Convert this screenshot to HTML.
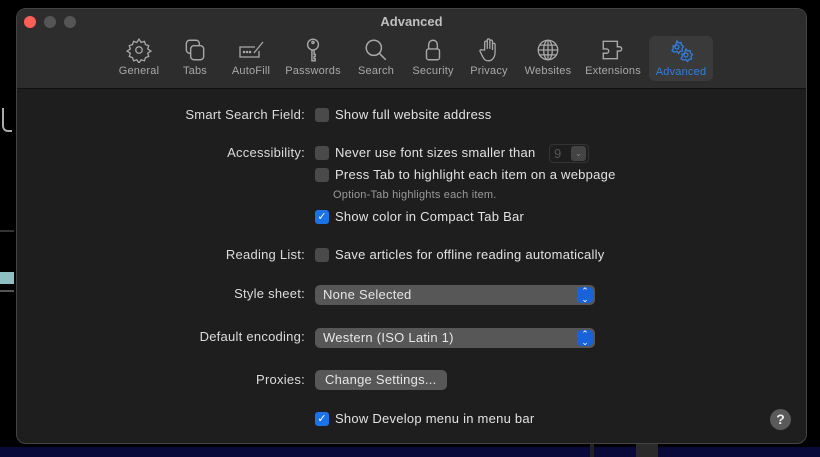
<!DOCTYPE html>
<html><head><style>
*{margin:0;padding:0;box-sizing:border-box}
body{width:820px;height:457px;background:#000;position:relative;overflow:hidden;font-family:"Liberation Sans",sans-serif;color:#e0e0e0}
.win{position:absolute;left:16px;top:8px;width:791px;height:436px;border-radius:10px;background:#1e1e1e;border:1px solid #444;overflow:hidden}
.tb{position:absolute;left:0;top:0;right:0;height:80px;background:#2d2d2d;border-bottom:1px solid #111}
.a{position:absolute}
.title{left:0;right:0;top:5px;text-align:center;font-weight:bold;font-size:13px;color:#bfbfbf}
.dot{width:12px;height:12px;border-radius:50%;top:7px;background:#555}
.it{position:absolute;top:26px;width:64px;height:46px;text-align:center;font-size:11px;color:#a8a8a8;letter-spacing:.2px}
.it svg{display:block;margin:2px auto 0;width:28px;height:26px}
.it span{position:absolute;left:-10px;right:-10px;top:30px;text-align:center}
.sel{background:#3a3a3a;border-radius:6px;color:#2f7fe0}
.lbl{position:absolute;right:501px;font-size:13px;color:#dcdcdc;text-align:right;white-space:nowrap;letter-spacing:.25px}
.cb{position:absolute;left:298px;width:14px;height:14px;border-radius:3px;background:#4a4a4a}
.cb.on{background:#1a73e8}
.tx{position:absolute;left:318px;font-size:13px;color:#e2e2e2;white-space:nowrap;letter-spacing:.25px}
.pop{position:absolute;left:298px;width:280px;height:20px;border-radius:5px;background:#575757;font-size:13px;color:#e6e6e6;padding:2px 8px;letter-spacing:.25px}
.pop i{position:absolute;right:2px;top:2px;width:16px;height:16px;border-radius:4px;background:#1a62d8;color:#fff;font-size:9px;line-height:8px;text-align:center;font-style:normal;letter-spacing:0}
</style></head><body>
<div class="a" style="left:0;top:230px;width:14px;height:2px;background:#333"></div>
<div class="a" style="left:0;top:272px;width:14px;height:12px;background:#8fbfc2"></div>
<div class="a" style="left:0;top:290px;width:14px;height:2px;background:#555"></div>
<div class="a" style="left:2px;top:108px;width:10px;height:24px;border-left:2px solid #aaa;border-bottom:2px solid #aaa;border-radius:0 0 0 6px"></div>
<div class="a" style="left:0;top:447px;width:820px;height:10px;background:#0a0a3a"></div>
<div class="a" style="left:590px;top:444px;width:4px;height:13px;background:#222"></div>
<div class="a" style="left:636px;top:444px;width:22px;height:13px;background:#2a2a2a"></div>
<div class="win">
<div class="tb">
<div class="a title">Advanced</div>
<div class="a dot" style="left:7px;background:#fe5f57"></div>
<div class="a dot" style="left:27px"></div>
<div class="a dot" style="left:47px"></div>
<div class="it" style="left:90px"><svg viewBox="0 0 24 24" fill="none" stroke="#a8a8a8" stroke-width="1.2"><circle cx="12" cy="12" r="3"/><path d="M12 2l2 3 3-1 1 3 3 1-1 3 3 2-3 2 1 3-3 1-1 3-3-1-2 3-2-3-3 1-1-3-3-1 1-3-3-2 3-2-1-3 3-1 1-3 3 1z"/></svg><span>General</span></div>
<div class="it" style="left:146px"><svg viewBox="0 0 24 24" fill="none" stroke="#a8a8a8" stroke-width="1.3"><rect x="4" y="3" width="12" height="12" rx="3"/><rect x="8" y="8" width="12" height="13" rx="3" fill="#2d2d2d"/></svg><span>Tabs</span></div>
<div class="it" style="left:202px"><svg viewBox="0 0 28 24" fill="none" stroke="#a8a8a8" stroke-width="1.3"><path d="M18 9H3v10h19v-6"/><path d="M17 15l9-11"/><circle cx="7" cy="14" r=".6"/><circle cx="10" cy="14" r=".6"/><circle cx="13" cy="14" r=".6"/></svg><span>AutoFill</span></div>
<div class="it" style="left:264px"><svg viewBox="0 0 24 24" fill="none" stroke="#a8a8a8" stroke-width="1.3"><circle cx="12" cy="7" r="5"/><circle cx="12" cy="5" r="1"/><path d="M11 12v10h3v-2h-1v-2h1v-2h-1v-4"/></svg><span>Passwords</span></div>
<div class="it" style="left:327px"><svg viewBox="0 0 24 24" fill="none" stroke="#a8a8a8" stroke-width="1.4"><circle cx="10" cy="10" r="7"/><path d="M15 15l6 6"/></svg><span>Search</span></div>
<div class="it" style="left:384px"><svg viewBox="0 0 24 24" fill="none" stroke="#a8a8a8" stroke-width="1.3"><path d="M8 11V7a4 4 0 018 0v4"/><rect x="6" y="11" width="12" height="10" rx="2"/></svg><span>Security</span></div>
<div class="it" style="left:440px"><svg viewBox="0 0 24 24" fill="none" stroke="#a8a8a8" stroke-width="1.2"><path d="M8 12V5a1.2 1.2 0 012.4 0v6V3a1.2 1.2 0 012.4 0v8V4a1.2 1.2 0 012.4 0v8V7a1.2 1.2 0 012.4 0v7c0 5-3 8-6 8s-4-1-6-5l-2-4a1.2 1.2 0 012-1z"/></svg><span>Privacy</span></div>
<div class="it" style="left:499px"><svg viewBox="0 0 24 24" fill="none" stroke="#a8a8a8" stroke-width="1.2"><circle cx="12" cy="12" r="9"/><ellipse cx="12" cy="12" rx="4" ry="9"/><path d="M3 12h18M4.5 7.5h15M4.5 16.5h15M12 3v18"/></svg><span>Websites</span></div>
<div class="it" style="left:564px"><svg viewBox="0 0 24 24" fill="none" stroke="#a8a8a8" stroke-width="1.3"><path d="M3 4h13v5h2a2 2 0 010 4h-2v7H3v-5h3a2 2 0 000-4H3z"/></svg><span>Extensions</span></div>
<div class="it sel" style="left:632px;top:27px;height:45px"><svg viewBox="0 0 28 24" fill="none" stroke="#2f7fe0" stroke-width="1.3"><circle cx="10" cy="8" r="2"/><path d="M10 2l1.5 2 2.5-.5.5 2.5 2 1.5-1.5 2 .5 2.5-2.5.5-1.5 2-1.5-2-2.5.5L7 13l-2-1.5 1.5-2L6 7l2.5-.5z"/><circle cx="19" cy="16" r="2"/><path d="M19 10l1.5 2 2.5-.5.5 2.5 2 1.5-1.5 2 .5 2.5-2.5.5-1.5 2-1.5-2-2.5.5L16 21l-2-1.5 1.5-2L15 15l2.5-.5z"/></svg><span style="color:#2f7fe0">Advanced</span></div>
</div>
<div class="lbl" style="top:98px">Smart Search Field:</div>
<div class="cb" style="top:99px"></div><div class="tx" style="top:98px">Show full website address</div>
<div class="lbl" style="top:136px">Accessibility:</div>
<div class="cb" style="top:137px"></div><div class="tx" style="top:136px">Never use font sizes smaller than</div>
<div class="a" style="left:532px;top:135px;width:40px;height:19px;border:1px solid #333;border-radius:4px;font-size:13px;color:#555;padding:1px 0 0 4px">9<div class="a" style="left:21px;top:1px;width:15px;height:15px;border-radius:3px;background:#444;color:#888;font-size:9px;text-align:center;line-height:15px">⌄</div></div>
<div class="cb" style="top:159px"></div><div class="tx" style="top:158px">Press Tab to highlight each item on a webpage</div>
<div class="a" style="left:316px;top:180px;font-size:11px;color:#999;letter-spacing:.2px">Option-Tab highlights each item.</div>
<div class="cb on" style="top:201px;color:#fff;font-size:11px;text-align:center;line-height:14px">✓</div><div class="tx" style="top:200px">Show color in Compact Tab Bar</div>
<div class="lbl" style="top:238px">Reading List:</div>
<div class="cb" style="top:239px"></div><div class="tx" style="top:238px">Save articles for offline reading automatically</div>
<div class="lbl" style="top:277px">Style sheet:</div>
<div class="pop" style="top:276px">None Selected<i>⌃<br>⌄</i></div>
<div class="lbl" style="top:320px">Default encoding:</div>
<div class="pop" style="top:319px">Western (ISO Latin 1)<i>⌃<br>⌄</i></div>
<div class="lbl" style="top:363px">Proxies:</div>
<div class="pop" style="top:361px;width:132px;padding-left:10px">Change Settings...</div>
<div class="cb on" style="top:403px;color:#fff;font-size:11px;text-align:center;line-height:14px">✓</div><div class="tx" style="top:402px">Show Develop menu in menu bar</div>
<div class="a" style="left:753px;top:400px;width:21px;height:21px;border-radius:50%;background:#5a5a5a;color:#eee;font-weight:bold;font-size:14px;text-align:center;line-height:21px">?</div>
</div>
</body></html>
